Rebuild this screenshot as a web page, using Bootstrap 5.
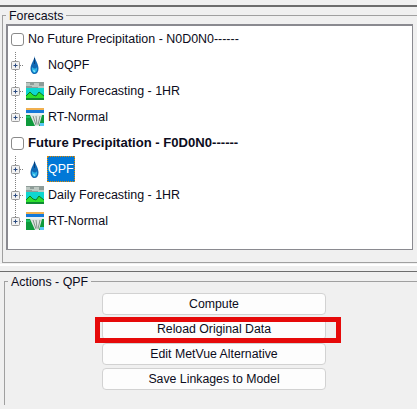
<!DOCTYPE html>
<html lang="en">
<head>
<meta charset="utf-8">
<title>Forecasts</title>
<link href="https://cdn.jsdelivr.net/npm/bootstrap@5.3.0/dist/css/bootstrap.min.css" rel="stylesheet">
<style>
html,body{margin:0;height:409px;overflow:hidden;background:#f0f0f0;}
body{font-family:"Liberation Sans",Arial,sans-serif;font-size:12.45px;color:#0c0c20;line-height:16px;width:417px;}
.top-rule{height:2px;background:#6d6d6d;margin-top:5px;}
.fset{border:1px solid #a0a0a0;margin:0 -6px 0 2px;padding:0 0 0 3px;min-width:0;}
.fset-a{height:256px;margin-top:0;padding-right:9px;}
.fset legend{float:none;width:auto;margin:0;padding:0 3px;font-size:12.4px;line-height:19px;height:16px;color:#0c0c20;}
.tree-box{background:#fff;border:2px solid #8a8a90;border-right-width:1px;border-bottom-width:1px;height:226px;margin-top:1px;}
.tree-row{height:26px;}
.tree-check{width:13px;height:13px;border:1.5px solid #8a8a8a;border-radius:3px;background:#fff;margin:0 4px 0 3px;flex:none;}
.tree-strong{font-weight:700;font-size:13.1px;}
.tree-gut{width:17px;height:26px;flex:none;display:block;margin-left:3px;}
.tree-ico{width:22px;height:20px;flex:none;display:block;margin-left:-5px;}
.tree-text{margin-left:2px;padding:0 1px;height:26px;line-height:26px;}
.tree-sel{background:#0078d7;color:#fff;outline:1px dotted #e08a00;outline-offset:-1px;width:28px;}
.sep-rule{height:2px;margin-top:1px;background:#fff;}
.split-rule{height:1px;background:#6d6d6d;margin-top:5px;}
.fset-b{margin:1px -6px 0 4px;height:132px;position:relative;border-bottom:0;padding:0;}
.fset-b legend{margin-left:3px;padding:0 3px;}
.act-col{width:224px;margin:4px 0 0 97px;gap:3px;}
.act-btn{height:22px;padding:0;font-size:12.3px;line-height:20px;background:#fdfdfd;border:1px solid #d2d2d2;border-radius:4px;color:#0c0c20;font-family:inherit;}
.act-btn:hover{background:#fdfdfd;color:#0c0c20;}
.act-mark{position:absolute;left:90px;top:28px;width:246px;height:26px;border:5px solid #e60a0a;pointer-events:none;}
</style>
</head>
<body>
<svg width="0" height="0" class="position-absolute">
  <defs>
    <symbol id="gut-top" viewBox="0 0 17 26">
      <path d="M4.500 0V26" stroke="#808080" stroke-dasharray="1 1" fill="none"/>
      <rect x=".5" y="9.500" width="8" height="8" rx="1" fill="#f2f2f2" stroke="#9a9a9a"/>
      <path d="M2.500 13.500H6.500M4.500 11.500V15.500" stroke="#2a4a80" fill="none"/>
      <path d="M9 13.500H13" stroke="#808080" stroke-dasharray="1 1" fill="none"/>
    </symbol>
    <symbol id="gut-end" viewBox="0 0 17 26">
      <path d="M4.500 0V10" stroke="#808080" stroke-dasharray="1 1" fill="none"/>
      <rect x=".5" y="9.500" width="8" height="8" rx="1" fill="#f2f2f2" stroke="#9a9a9a"/>
      <path d="M2.500 13.500H6.500M4.500 11.500V15.500" stroke="#2a4a80" fill="none"/>
      <path d="M9 13.500H13" stroke="#808080" stroke-dasharray="1 1" fill="none"/>
    </symbol>
    <symbol id="drop" viewBox="0 0 22 20">
      <path d="M11.500 1C11.500 5 7.500 9 7.500 13.500C7.500 17 9.500 19 11.500 19C14 19 15.500 17 15.500 13.500C15.500 9 12 5 11.500 1Z" fill="#0f68b4"/>
      <path d="M9 12C8.500 15 9.500 17.500 11.500 18C13.500 17.500 14.500 15 14 12C13 14 11 14 9 12Z" fill="#2cb4e8"/>
      <path d="M10 15C10 16.500 11 17 12 17C12.500 16 12 15 10 15Z" fill="#8ae4f4"/>
      <path d="M11.500 3V9" stroke="#0a3f78" fill="none"/>
    </symbol>
    <symbol id="land" viewBox="0 0 22 20">
      <rect x="3" y="1" width="18" height="18" fill="#0fd6d0"/>
      <rect x="3" y="1" width="18" height="6" fill="#8e9c98"/>
      <path d="M3 2H7V4H11V2H16V5H21V7H15V6H9V5H3Z" fill="#bcc8c2"/>
      <path d="M3 15L7 11L10 14L13 15L16 11L21 15V19H3Z" fill="#2ee02e"/>
      <path d="M3 15L7 11L10 14L13 15L16 11L21 15" stroke="#0a7a28" fill="none"/>
      <rect x="3" y="17" width="18" height="2" fill="#0e8a34"/>
    </symbol>
    <symbol id="rt" viewBox="0 0 22 20">
      <rect x="3" y="1" width="18" height="18" fill="#0e9a3c"/>
      <rect x="3" y="1" width="18" height="2" fill="#f0b050"/>
      <rect x="3" y="3" width="18" height="3" fill="#1478d8"/>
      <path d="M3 6H21V8H3Z" fill="#e8f0f0"/>
      <path d="M7 8H19L16 19H12Z" fill="#dfe6e2"/>
      <path d="M10 9L13 18M13 9L14 17M17 9L15 18" stroke="#85958c" fill="none"/>
      <rect x="3" y="9" width="4" height="2" fill="#18c060"/>
      <rect x="17" y="16" width="4" height="3" fill="#58c8f4"/>
    </symbol>
  </defs>
</svg>

<div class="top-rule"></div>
<fieldset class="fset fset-a">
  <legend>Forecasts</legend>
  <div class="tree-box">
    <div class="tree-row d-flex align-items-center"><span class="tree-check"></span><span>No Future Precipitation - N0D0N0------</span></div>
    <div class="tree-row d-flex align-items-center"><svg class="tree-gut"><use href="#gut-top"/></svg><svg class="tree-ico"><use href="#drop"/></svg><span class="tree-text">NoQPF</span></div>
    <div class="tree-row d-flex align-items-center"><svg class="tree-gut"><use href="#gut-top"/></svg><svg class="tree-ico"><use href="#land"/></svg><span class="tree-text">Daily Forecasting - 1HR</span></div>
    <div class="tree-row d-flex align-items-center"><svg class="tree-gut"><use href="#gut-end"/></svg><svg class="tree-ico"><use href="#rt"/></svg><span class="tree-text">RT-Normal</span></div>
    <div class="tree-row d-flex align-items-center"><span class="tree-check"></span><span class="tree-strong">Future Precipitation - F0D0N0------</span></div>
    <div class="tree-row d-flex align-items-center"><svg class="tree-gut"><use href="#gut-top"/></svg><svg class="tree-ico"><use href="#drop"/></svg><span class="tree-text tree-sel">QPF</span></div>
    <div class="tree-row d-flex align-items-center"><svg class="tree-gut"><use href="#gut-top"/></svg><svg class="tree-ico"><use href="#land"/></svg><span class="tree-text">Daily Forecasting - 1HR</span></div>
    <div class="tree-row d-flex align-items-center"><svg class="tree-gut"><use href="#gut-end"/></svg><svg class="tree-ico"><use href="#rt"/></svg><span class="tree-text">RT-Normal</span></div>
  </div>
</fieldset>
<div class="sep-rule"></div>
<div class="split-rule"></div>
<fieldset class="fset fset-b">
  <legend>Actions - QPF</legend>
  <div class="act-col d-flex flex-column">
    <button type="button" class="btn act-btn">Compute</button>
    <button type="button" class="btn act-btn">Reload Original Data</button>
    <button type="button" class="btn act-btn">Edit MetVue Alternative</button>
    <button type="button" class="btn act-btn">Save Linkages to Model</button>
  </div>
  <div class="act-mark"></div>
</fieldset>
</body>
</html>
